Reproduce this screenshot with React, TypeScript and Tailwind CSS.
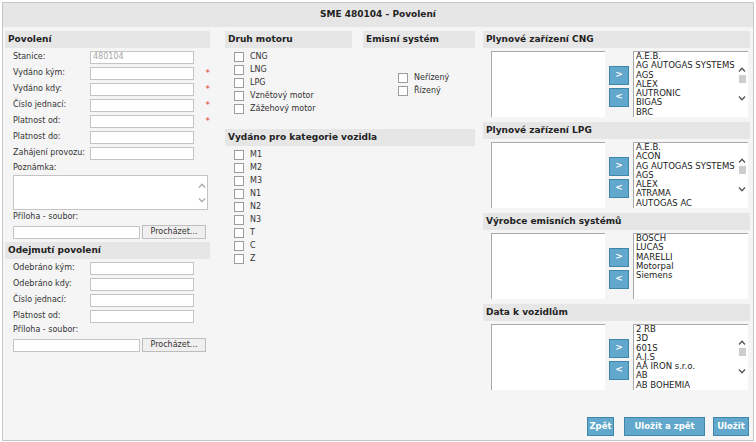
import React from "react";

const Up = ({ c = "#555" }: { c?: string }) => (
  <svg width="8" height="5" viewBox="0 0 8 5"><path d="M1 4.5 L4 1.2 L7 4.5" fill="none" stroke={c} strokeWidth="1.3" /></svg>
);
const Down = ({ c = "#555" }: { c?: string }) => (
  <svg width="8" height="5" viewBox="0 0 8 5"><path d="M1 0.5 L4 3.8 L7 0.5" fill="none" stroke={c} strokeWidth="1.3" /></svg>
);

function Header({ children, className = "" }: { children: React.ReactNode; className?: string }) {
  return (
    <div className={"h-[17px] bg-[#e6e6e6] flex items-center pl-[3px] font-bold text-[9px] text-[#222] " + className}>
      {children}
    </div>
  );
}

function Row({ label, req, value }: { label: string; req?: boolean; value?: string }) {
  return (
    <div className="h-[16px] flex items-center">
      <div className="w-[85px] pl-[8px] shrink-0">{label}</div>
      <div className="w-[104px] h-[13px] bg-white border border-[#c4c4c4] text-[#a6a6a6] flex items-center pl-[2px] text-[8px]">
        {value}
      </div>
      {req && <div className="ml-[12px] text-[#e23b3b] text-[9px] leading-none">*</div>}
    </div>
  );
}

function FileRow() {
  return (
    <div className="flex items-center mt-[2px] pl-[8px]">
      <div className="w-[127px] h-[13px] bg-white border border-[#c4c4c4]" />
      <div className="ml-[2px] w-[64px] h-[14px] bg-[#efefef] border border-[#bdbdbd] flex items-center justify-center text-[8px]">
        Procházet...
      </div>
    </div>
  );
}

function Check({ label }: { label: string }) {
  return (
    <div className="h-[13px] flex items-center">
      <div className="w-[10px] h-[10px] bg-white border border-[#9c9c9c]" />
      <div className="ml-[6px]">{label}</div>
    </div>
  );
}

function Picker({ title, items }: { title: string; items: string[] }) {
  return (
    <div>
      <Header>{title}</Header>
      <div className="flex mt-[3px] h-[66px]">
        <div className="ml-[8px] w-[114px] h-full bg-white border-t border-l border-t-[#a8a8a8] border-l-[#a8a8a8]" />
        <div className="w-[28px] flex flex-col items-center justify-center gap-[3px] pt-[4px]">
          <div className="w-[20px] h-[19px] bg-[#62a8cc] border border-[#3f86ad] text-white font-bold flex items-center justify-center text-[9px]">&gt;</div>
          <div className="w-[20px] h-[19px] bg-[#62a8cc] border border-[#3f86ad] text-white font-bold flex items-center justify-center text-[9px]">&lt;</div>
        </div>
        <div className="w-[115px] h-full bg-white border-t border-l border-t-[#a8a8a8] border-l-[#a8a8a8] flex overflow-hidden">
          <div className="flex-1 pl-[2px] text-[8.5px] leading-[9.3px] text-[#222]">
            {items.map((i) => (
              <div key={i} className="whitespace-nowrap">{i}</div>
            ))}
          </div>
          {items.length > 6 && (
            <div className="w-[12px] flex flex-col items-center pt-[15px]">
              <Up />
              <div className="mt-[3px] w-[7px] h-[8px] bg-[#cdcdcd]" />
              <div className="mt-[13px]"><Down /></div>
            </div>
          )}
        </div>
      </div>
    </div>
  );
}

function Btn({ w, children }: { w: string; children: React.ReactNode }) {
  return (
    <div className={"h-[19px] bg-[#62a8cc] border border-[#3f86ad] text-white font-bold text-[8.5px] flex items-center justify-center " + w}>
      {children}
    </div>
  );
}

export default function App() {
  return (
    <div className="w-[756px] h-[442px] bg-white pt-[2px] pl-[2px] font-['DejaVu_Sans',sans-serif] text-[8px] text-[#333]">
      <div className="w-[752px] h-[439px] border border-[#c6c6c6] bg-[#f5f5f5] flex flex-col">
        <div className="h-[24px] bg-[#e6e6e6] flex items-center justify-center font-bold text-[9px] text-[#222] shrink-0">
          SME 480104 - Povolení
        </div>
        <div className="flex pl-[2px] pt-[4px] flex-1">
          {/* Left column */}
          <div className="w-[205px] flex flex-col">
            <Header>Povolení</Header>
            <div className="mt-[1px]">
              <Row label="Stanice:" value="480104" />
              <Row label="Vydáno kým:" req />
              <Row label="Vydáno kdy:" req />
              <Row label="Číslo jednací:" req />
              <Row label="Platnost od:" req />
              <Row label="Platnost do:" />
              <Row label="Zahájení provozu:" />
            </div>
            <div className="pl-[8px] h-[14px] flex items-center">Poznámka:</div>
            <div className="ml-[8px] w-[195px] h-[35px] bg-white border border-[#c4c4c4] flex justify-end">
              <div className="w-[10px] flex flex-col items-center justify-center gap-[10px]">
                <Up c="#aaa" />
                <Down c="#aaa" />
              </div>
            </div>
            <div className="pl-[8px] h-[13px] flex items-end">Příloha - soubor:</div>
            <FileRow />
            <Header className="mt-[3px]">Odejmutí povolení</Header>
            <div className="mt-[1px]">
              <Row label="Odebráno kým:" />
              <Row label="Odebráno kdy:" />
              <Row label="Číslo jednací:" />
              <Row label="Platnost od:" />
            </div>
            <div className="pl-[8px] h-[12px] flex items-center">Příloha - soubor:</div>
            <FileRow />
          </div>

          {/* Middle column */}
          <div className="ml-[15px] w-[250px] flex flex-col">
            <div className="flex">
              <div className="w-[127px]">
                <Header>Druh motoru</Header>
                <div className="mt-[2px] pl-[9px]">
                  <Check label="CNG" />
                  <Check label="LNG" />
                  <Check label="LPG" />
                  <Check label="Vznětový motor" />
                  <Check label="Zážehový motor" />
                </div>
              </div>
              <div className="ml-[11px] w-[112px]">
                <Header>Emisní systém</Header>
                <div className="mt-[23px] pl-[35px]">
                  <Check label="Neřízený" />
                  <Check label="Řízený" />
                </div>
              </div>
            </div>
            <Header className="mt-[14px]">Vydáno pro kategorie vozidla</Header>
            <div className="mt-[2px] pl-[9px]">
              {["M1", "M2", "M3", "N1", "N2", "N3", "T", "C", "Z"].map((k) => (
                <Check key={k} label={k} />
              ))}
            </div>
          </div>

          {/* Right column */}
          <div className="ml-[8px] w-[267px] flex flex-col gap-[5px]">
            <Picker title="Plynové zařízení CNG" items={["A.E.B.", "AG AUTOGAS SYSTEMS", "AGS", "ALEX", "AUTRONIC", "BIGAS", "BRC"]} />
            <Picker title="Plynové zařízení LPG" items={["A.E.B.", "ACON", "AG AUTOGAS SYSTEMS", "AGS", "ALEX", "ATRAMA", "AUTOGAS AC"]} />
            <Picker title="Výrobce emisních systémů" items={["BOSCH", "LUCAS", "MARELLI", "Motorpal", "Siemens"]} />
            <Picker title="Data k vozidlům" items={["2 RB", "3D", "601S", "A.J.S", "AA IRON s.r.o.", "AB", "AB BOHEMIA"]} />
            <div className="flex justify-end items-center gap-[8px] mt-[22px] pr-[1px]">
              <Btn w="w-[27px]">Zpět</Btn>
              <Btn w="w-[81px] ml-[2px]">Uložit a zpět</Btn>
              <Btn w="w-[36px]">Uložit</Btn>
            </div>
          </div>
        </div>
      </div>
    </div>
  );
}
